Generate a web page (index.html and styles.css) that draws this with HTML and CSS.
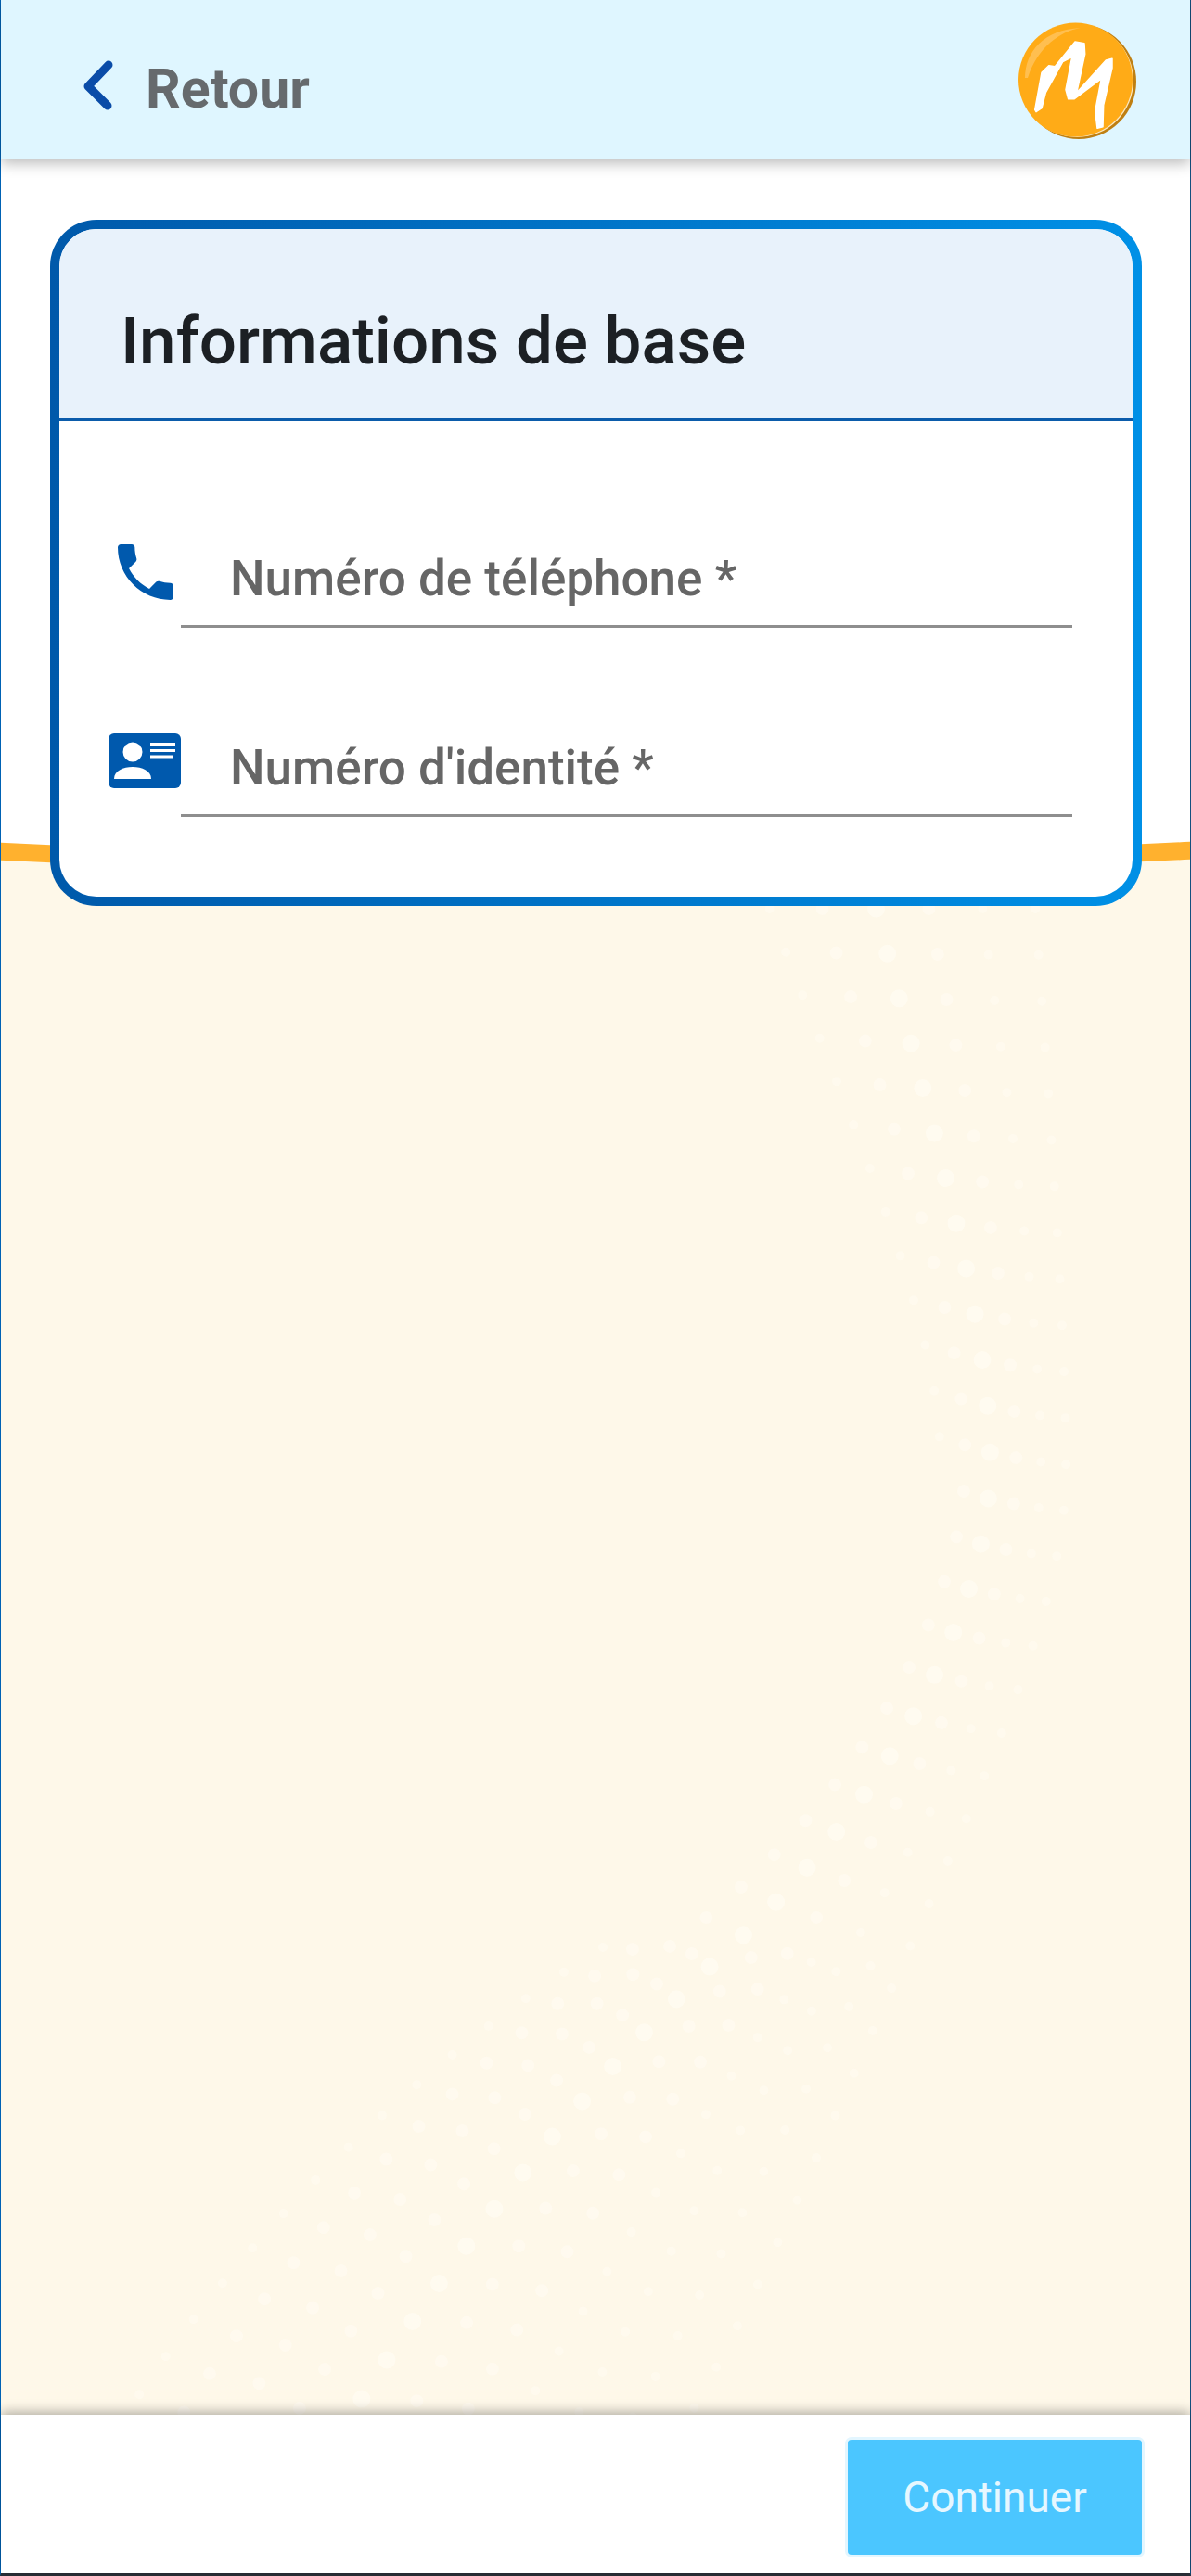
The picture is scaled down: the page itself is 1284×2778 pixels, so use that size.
FILE: index.html
```html
<!DOCTYPE html>
<html lang="fr">
<head>
    <meta charset="UTF-8">
    <meta name="viewport" content="width=device-width, initial-scale=1.0">
    <title>Informations de base</title>
    <link rel="stylesheet" href="styles.css">
</head>
<body>
    <div class="app">
        <header class="topbar">
            <a class="back" href="#">
                <svg class="back-icon" viewBox="0 0 36 60"><path d="M28 8 L6 31 L27 52"/></svg>
                <span>Retour</span>
            </a>
            <svg class="logo" viewBox="0 0 132 132">
                <circle class="logo-rim" cx="68" cy="66" r="62"/>
                <circle class="logo-line" cx="66" cy="65" r="61"/>
                <circle class="logo-disc" cx="64.500" cy="64" r="61.500"/>
                <path class="logo-shine" d="M10 62 C10 34 30 10 70 8 C48 12 24 28 13 62 Z"/>
                <path class="logo-m" d="M20.700 96.300 L28 56.300 L35.700 48.700 L42.300 49.700 L64 23 L74 24.700 L74.700 36.300 L65.700 78 L97.300 43 L104 41.300 L104 51.300 L94.700 91.300 L94 114.700 L88 116.300 L85.700 98 L92.300 63 L63.300 84.700 L56.700 84.700 L54 74.700 L60.700 39.700 L50.700 44.700 L32.300 78 L28 94.700 L22 98.700 Z"/>
            </svg>
        </header>

        <main class="content">
            <svg class="backdrop" viewBox="0 0 1284 2432" preserveAspectRatio="none">
                <path class="backdrop-white" d="M0 0 H1284 V743 Q642 775 0 743 Z"/>
                <path class="backdrop-arc" d="M-4 746 Q642 780 1288 745"/>
                <g class="dots">
                    <!-- long lines, top of the wave down to the bottom -->
                    <path class="dots-a" d="M830 808 C900 1000 1020 1250 1014 1414"/>
                    <path class="dots-b" d="M887 808 C946 1000 1046 1250 1041 1414 C1036 1560 932 1774 714 1933 C540 2062 364 2260 252 2440"/>
                    <path class="dots-c" d="M945 808 C992 1000 1072 1250 1068 1414 C1065 1560 964 1768 778 1937 C630 2074 478 2270 374 2440"/>
                    <path class="dots-b" d="M1002 808 C1038 1000 1098 1250 1096 1414 C1093 1560 996 1762 843 1942 C720 2086 592 2280 496 2440"/>
                    <path class="dots-a" d="M1060 808 C1084 1000 1124 1250 1123 1414 C1122 1560 1028 1756 907 1946 C810 2098 706 2290 618 2440"/>
                    <path class="dots-a" d="M1117 808 C1130 1000 1150 1250 1150 1414 C1150 1560 1060 1750 971 1951 C900 2110 820 2300 740 2440"/>
                    <!-- extra lines where the wave fans out -->
                    <path class="dots-a" d="M650 1928 C450 2050 250 2250 130 2440"/>
                    <path class="dots-b" d="M682 1930 C495 2056 307 2255 191 2440"/>
                    <path class="dots-b" d="M746 1935 C585 2068 421 2265 313 2440"/>
                    <path class="dots-b" d="M810 1939 C675 2080 535 2275 435 2440"/>
                    <path class="dots-a" d="M875 1944 C765 2092 649 2285 557 2440"/>
                    <path class="dots-a" d="M939 1948 C855 2104 763 2295 679 2440"/>
                </g>
            </svg>

            <section class="card">
                <h1 class="card-title">Informations de base</h1>
                <form class="card-body">
                    <div class="field">
                        <svg class="icon-phone" viewBox="0 0 24 24"><path d="M6.620 10.790c1.440 2.830 3.760 5.140 6.590 6.590l2.200-2.200c.270-.270.670-.360 1.020-.240 1.120.370 2.330.570 3.570.570.550 0 1 .450 1 1V20c0 .550-.450 1-1 1-9.390 0-17-7.610-17-17 0-.550.450-1 1-1h3.500c.550 0 1 .450 1 1 0 1.250.200 2.450.570 3.570.110.350.030.740-.250 1.020l-2.200 2.200z"/></svg>
                        <div class="field-line">Numéro de téléphone *</div>
                    </div>
                    <div class="field">
                        <svg class="icon-id" viewBox="0 0 78 59">
                            <rect class="id-card" width="78" height="59" rx="6"/>
                            <circle class="id-mark" cx="26" cy="20" r="10.500"/>
                            <path class="id-mark" d="M6 49 C6 40 16 36 26 36 C36 36 46 40 46 49 Z"/>
                            <rect class="id-mark" x="45" y="10" width="27" height="3"/>
                            <rect class="id-mark" x="45" y="17" width="27" height="3"/>
                            <rect class="id-mark" x="45" y="23.500" width="24" height="3"/>
                        </svg>
                        <div class="field-line">Numéro d'identité *</div>
                    </div>
                </form>
            </section>
        </main>

        <footer class="bottombar">
            <button class="next" type="button">Continuer</button>
        </footer>
    </div>
</body>
</html>
```

FILE: styles.css
```css
html, body {
    margin: 0;
    padding: 0;
}

body {
    font-family: Roboto, "Liberation Sans", sans-serif;
    background-color: #fff;
}

.app {
    display: flex;
    flex-direction: column;
    box-sizing: border-box;
    height: 2778px;
    border-left: 1px solid #0062b4;
    border-right: 1px solid #14507f;
    border-bottom: 3px solid #2a3038;
}

.topbar {
    position: relative;
    z-index: 2;
    flex: none;
    display: flex;
    align-items: center;
    justify-content: space-between;
    box-sizing: border-box;
    height: 172px;
    padding: 0 56px 0 88px;
    background-color: #dff6ff;
    box-shadow: 0 4px 14px rgba(0, 0, 0, 0.28);
}

.back {
    display: flex;
    align-items: center;
    gap: 32px;
    margin-top: 18px;
    color: #666a6d;
    font-size: 59px;
    font-weight: 700;
    line-height: 1;
    text-decoration: none;
}

.back-icon {
    width: 36px;
    height: 60px;
    margin-top: -6px;
    fill: none;
    stroke: #0a4ca8;
    stroke-width: 9;
    stroke-linecap: round;
    stroke-linejoin: round;
}

.logo {
    width: 132px;
    height: 132px;
    margin-top: 4px;
}

.logo-rim {
    fill: #bf7f12;
}

.logo-line {
    fill: #fbe9c4;
}

.logo-disc {
    fill: #ffab17;
}

.logo-shine {
    fill: #ffc76a;
    opacity: 0.7;
}

.logo-m {
    fill: #fff;
    stroke: #fff;
    stroke-width: 1.5;
    stroke-linejoin: round;
}

.content {
    position: relative;
    flex: 1;
    padding: 65px 52px 0 53px;
    background-color: #fef8e9;
}

.backdrop {
    position: absolute;
    top: 0;
    left: 0;
    width: 100%;
    height: 100%;
}

.backdrop-white {
    fill: #fff;
}

.backdrop-arc {
    fill: none;
    stroke: #ffb12e;
    stroke-width: 19;
}

.dots path {
    fill: none;
    stroke: #fffbf1;
    stroke-linecap: round;
    stroke-dasharray: 0 50;
}

.dots-a {
    stroke-width: 10;
    opacity: 0.6;
}

.dots-b {
    stroke-width: 14;
    opacity: 0.7;
}

.dots-c {
    stroke-width: 19;
    opacity: 0.85;
}

.card {
    position: relative;
    box-sizing: border-box;
    height: 740px;
    border: 10px solid transparent;
    border-radius: 50px;
    background: linear-gradient(#fff, #fff) padding-box,
        linear-gradient(90deg, #0059aa, #0090e6) border-box;
}

.card-title {
    box-sizing: border-box;
    height: 207px;
    margin: 0;
    padding: 85px 0 0 66px;
    border-bottom: 3px solid #0b5cab;
    border-radius: 40px 40px 0 0;
    background-color: #e8f2fb;
    color: #1c2024;
    font-size: 71px;
    font-weight: 500;
    line-height: 1;
}

.card-body {
    display: flex;
    flex-direction: column;
    gap: 121px;
    padding: 140px 65px 0 53px;
}

.field {
    display: grid;
    grid-template-columns: 78px 1fr;
    align-items: start;
}

.icon-phone {
    width: 80px;
    height: 80px;
    margin-top: -17px;
    fill: #0059ad;
}

.icon-id {
    width: 78px;
    height: 59px;
    margin-top: -7px;
}

.id-card {
    fill: #0059ad;
}

.id-mark {
    fill: #fff;
}

.field-line {
    height: 80px;
    padding-left: 53px;
    border-bottom: 3px solid #8e8e8e;
    color: #666;
    font-size: 53px;
    font-weight: 500;
    line-height: 60px;
}

.bottombar {
    position: relative;
    z-index: 2;
    flex: none;
    display: flex;
    justify-content: flex-end;
    align-items: flex-start;
    box-sizing: border-box;
    height: 171px;
    padding: 27px 52px 0 0;
    background-color: #fff;
    box-shadow: 0 -3px 12px rgba(0, 0, 0, 0.3);
}

.next {
    width: 317px;
    height: 124px;
    border: none;
    border-radius: 4px;
    background-color: #4bc6ff;
    box-shadow: 0 0 0 3px #e3f6ff;
    color: #e6f7ff;
    font-family: Roboto, "Liberation Sans", sans-serif;
    font-size: 46px;
    cursor: pointer;
}
```
